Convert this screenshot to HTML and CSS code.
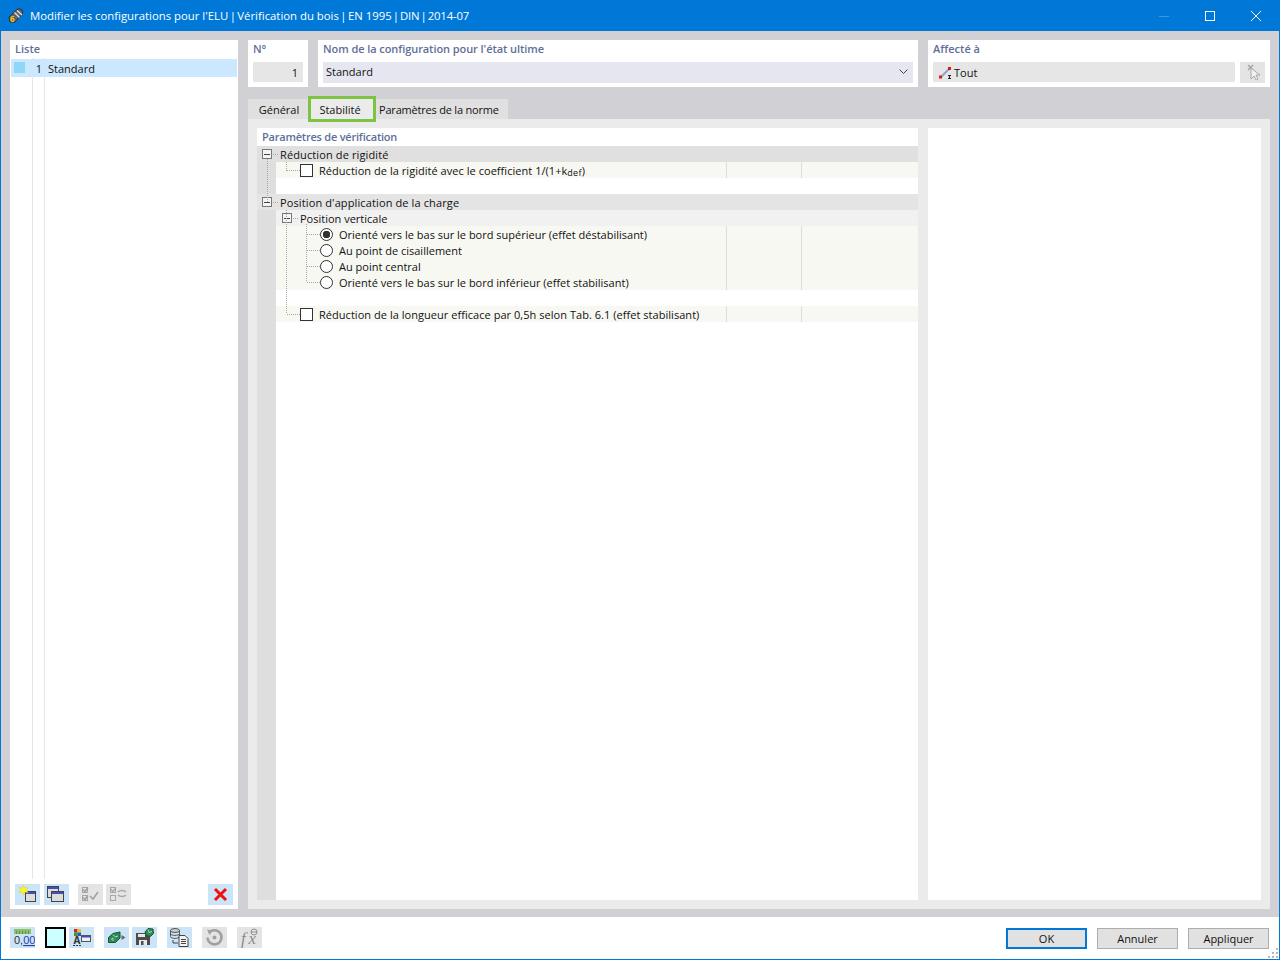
FILE: index.html
```html
<!DOCTYPE html>
<html lang="fr">
<head>
  <meta charset="UTF-8">
  <title>Modifier les configurations pour l'ELU</title>
  <link rel="stylesheet" href="styles.css">
</head>
<body>
  <div class="window">
    <div class="titlebar">
      <svg class="app-icon" width="16" height="16" viewBox="0 0 16 16">
        <path d="M1 9 9 1.500c1.500-1 4-.8 5 .5s1 3.500-.2 4.800L7 14 2 14z" fill="#5f646a" stroke="#2c3034"/>
        <path d="M6.500 4.500l5 5M9 2.500l5 4.500" stroke="#e2e4e6" stroke-width="1.200"/>
        <text x="2" y="14" class="app-six">6</text>
      </svg>
      <span class="title-text">Modifier les configurations pour l'ELU <span class="sep">|</span> Vérification du bois <span class="sep">|</span> EN 1995 <span class="sep sep-tight">|</span> <span class="title-tail">DIN <span class="sep">|</span> 2014-07</span></span>
      <div class="win-btns">
        <span class="win-btn"><svg width="10" height="10" viewBox="0 0 10 10"><path d="M0 5.500h10" stroke="#3f96e0"/></svg></span>
        <span class="win-btn"><svg width="10" height="10" viewBox="0 0 10 10"><rect x=".5" y=".5" width="9" height="9" fill="none" stroke="#fff"/></svg></span>
        <span class="win-btn"><svg width="10" height="10" viewBox="0 0 10 10"><path d="M0 0l10 10M10 0 0 10" stroke="#fff"/></svg></span>
      </div>
    </div>

    <div class="main">
      <div class="list-panel">
        <div class="panel-label">Liste</div>
        <div class="list-body">
          <div class="list-row">
            <span class="swatch"></span>
            <span class="list-no">1</span>
            <span class="list-name">Standard</span>
          </div>
        </div>
        <div class="list-tools">
          <span class="tool">
            <svg width="25" height="21" viewBox="0 0 25 21">
              <rect x="10.500" y="7.500" width="10" height="10" fill="#dcdcdc" stroke="#444"/>
              <rect x="11" y="8" width="9" height="2" fill="#3f51b5"/>
              <path d="M8.500 1l1.300 3.200 3.400-.7-2 2.700 2 2.600-3.400-.7-1.300 3.200-1.300-3.200-3.400.7 2-2.600-2-2.700 3.400.7z" fill="#f8f230" stroke="#e0d020" stroke-width=".5"/>
            </svg>
          </span>
          <span class="tool">
            <svg width="25" height="21" viewBox="0 0 25 21">
              <rect x="3.500" y="2.500" width="11" height="11" fill="#dcdcdc" stroke="#444"/>
              <rect x="4" y="3" width="10" height="2" fill="#3f51b5"/>
              <rect x="7.500" y="7.500" width="12" height="10" fill="#dcdcdc" stroke="#444"/>
              <rect x="8" y="8" width="11" height="2" fill="#3f51b5"/>
            </svg>
          </span>
          <span class="tool off tool-third">
            <svg width="25" height="21" viewBox="0 0 25 21">
              <rect x="4.500" y="3.500" width="5" height="5" fill="none" stroke="#a8a8a8"/>
              <rect x="4.500" y="11.500" width="5" height="5" fill="none" stroke="#a8a8a8"/>
              <path d="M5 5.500l2 2 3-4M5 13.500l2 2 3-4M12 12l3 3 5-7" fill="none" stroke="#a0a0a0" stroke-width="1.500"/>
            </svg>
          </span>
          <span class="tool off tool-fourth">
            <svg width="25" height="21" viewBox="0 0 25 21">
              <rect x="4.500" y="3.500" width="5" height="5" fill="none" stroke="#a8a8a8"/>
              <rect x="4.500" y="11.500" width="5" height="5" fill="none" stroke="#a8a8a8"/>
              <path d="M5 5.500l2 2 3-4" fill="none" stroke="#a0a0a0" stroke-width="1.200"/>
              <path d="M12 8c2-2 6-2 8 0M20 11c-2 2-6 2-8 0" fill="none" stroke="#a8a8a8" stroke-width="1.500"/>
            </svg>
          </span>
          <span class="tool push-right">
            <svg width="25" height="21" viewBox="0 0 25 21">
              <path d="M7 5l11 11M18 5 7 16" stroke="#f01010" stroke-width="3"/>
            </svg>
          </span>
        </div>
      </div>

      <div class="right-col">
        <div class="head-row">
          <div class="head-box box-no">
            <div class="panel-label">N°</div>
            <div class="field field-no">1</div>
          </div>
          <div class="head-box box-name">
            <div class="panel-label label-name">Nom de la configuration pour l'état ultime</div>
            <div class="field field-name">
              <span>Standard</span>
              <svg width="9" height="5" viewBox="0 0 9 5"><path d="M.5.5 4.500 4.500 8.500.5" fill="none" stroke="#444"/></svg>
            </div>
          </div>
          <div class="head-box box-to">
            <div class="panel-label">Affecté à</div>
            <div class="to-line">
              <div class="field field-to">
                <svg width="13" height="13" viewBox="0 0 13 13">
                  <path d="M2 11 10 3" stroke="#8aa4cc" stroke-width="2"/>
                  <rect x="0" y="9.500" width="3" height="3" fill="#e01818"/>
                  <rect x="9" y="1" width="3" height="3" fill="#e01818"/>
                  <path d="M9 9.500h3M10.500 9.500v3.500M9 12.500h3" stroke="#222"/>
                </svg>
                <span>Tout</span>
              </div>
              <span class="pick-btn">
                <svg width="25" height="21" viewBox="0 0 25 21">
                  <path d="M8 3l5 5M13 3 8 8" stroke="#a0a0a0" stroke-width="1.200"/>
                  <path d="M11 6v11l3-3 2 4 2-1-2-4h4z" fill="#f0f0f0" stroke="#a8a8a8"/>
                </svg>
              </span>
            </div>
          </div>
        </div>

        <div class="tabs">
          <span class="tab tab-first">Général</span>
          <span class="tab tab-active">Stabilité</span>
          <span class="tab tab-last">Paramètres de la norme</span>
        </div>

        <div class="tab-page">
          <div class="params">
            <div class="panel-label params-label">Paramètres de vérification</div>
            <div class="tree">
              <svg class="tree-lines" width="80" height="180" viewBox="0 0 80 180">
                <path d="M10.500 13v44M16 8.500h6M29.500 16v9M30 24.500h13M29.500 64v104M30 168.500h13M36 72.500h6M49.500 78v58M50 88.500h13M50 104.500h13M50 120.500h13M50 136.500h13M16 56.500h6" fill="none" stroke="#a8a8a8" stroke-dasharray="1 1"/>
              </svg>
              <div class="row row-head">
                <span class="exp"></span><span>Réduction de rigidité</span>
              </div>
              <div class="row row-item">
                <div class="cell cell-main lvl1"><span class="check"></span><span>Réduction de la rigidité avec le coefficient 1/(1+k<sub>def</sub>)</span></div>
                <div class="cell"></div><div class="cell"></div>
              </div>
              <div class="row-blank"></div>
              <div class="row row-head row-head2">
                <span class="exp"></span><span>Position d'application de la charge</span>
              </div>
              <div class="row row-sub">
                <span class="exp"></span><span>Position verticale</span>
              </div>
              <div class="row row-item">
                <div class="cell cell-main lvl2"><span class="radio radio-on"></span><span>Orienté vers le bas sur le bord supérieur (effet déstabilisant)</span></div>
                <div class="cell"></div><div class="cell"></div>
              </div>
              <div class="row row-item">
                <div class="cell cell-main lvl2"><span class="radio"></span><span>Au point de cisaillement</span></div>
                <div class="cell"></div><div class="cell"></div>
              </div>
              <div class="row row-item">
                <div class="cell cell-main lvl2"><span class="radio"></span><span>Au point central</span></div>
                <div class="cell"></div><div class="cell"></div>
              </div>
              <div class="row row-item">
                <div class="cell cell-main lvl2"><span class="radio"></span><span>Orienté vers le bas sur le bord inférieur (effet stabilisant)</span></div>
                <div class="cell"></div><div class="cell"></div>
              </div>
              <div class="row-blank"></div>
              <div class="row row-item">
                <div class="cell cell-main lvl1"><span class="check"></span><span>Réduction de la longueur efficace par 0,5h selon Tab. 6.1 (effet stabilisant)</span></div>
                <div class="cell"></div><div class="cell"></div>
              </div>
            </div>
          </div>
          <div class="side-pane"></div>
        </div>
      </div>
    </div>

    <div class="footer">
      <span class="tool units">
        <svg width="25" height="21" viewBox="0 0 25 21">
          <rect x="4" y="2" width="17" height="5" fill="#8cc068"/>
          <path d="M6.500 4v3M9.500 4v3M12.500 4v3M15.500 4v3M18.500 4v3" stroke="#5c9440"/>
          <text x="4" y="17" class="units-text">0,<tspan class="units-dec">00</tspan></text>
        </svg>
      </span>
      <span class="color-box"></span>
      <span class="tool">
        <svg width="25" height="21" viewBox="0 0 25 21">
          <rect x="5" y="2" width="3.500" height="3.500" fill="#e02020"/>
          <rect x="8.500" y="2" width="3.500" height="3.500" fill="#e8c820"/>
          <rect x="5" y="5.500" width="3.500" height="3.500" fill="#30a030"/>
          <rect x="8.500" y="5.500" width="3.500" height="3.500" fill="#3050d0"/>
          <text x="4.500" y="17" class="a-text">A</text>
          <rect x="12.500" y="8.500" width="9" height="6" fill="#f0f0f0" stroke="#555"/>
          <rect x="13" y="9" width="8" height="1.500" fill="#3f51b5"/>
          <path d="M4 18.500h2M7 18.500h2M10 18.500h2" stroke="#333"/>
        </svg>
      </span>
      <span class="tool gap-tool">
        <svg width="25" height="21" viewBox="0 0 25 21">
          <path d="M4.500 10.500 9 6.500l7-1.500v6l-4.500 4.500h-7z" fill="#2e8b57" stroke="#1c5236"/>
          <path d="M7 12.500l2-1.500v3M11 10l3-1M9 7.500l1.500 2" stroke="#a6dcbc" fill="none"/>
          <path d="M17.500 8l4 2.500-4 2.500z" fill="#666"/>
        </svg>
      </span>
      <span class="tool">
        <svg width="25" height="21" viewBox="0 0 25 21">
          <path d="M4 6h11l3 3v9H4z" fill="#4c4c4c"/>
          <rect x="6" y="7" width="7" height="3" fill="#e8e8e8"/>
          <rect x="7" y="13" width="8" height="5" fill="#e8e8e8"/>
          <rect x="9" y="14" width="2.500" height="4" fill="#4c4c4c"/>
          <path d="M13 5l3-3.500 5 .5.500 4.500-3 3-4.500-1z" fill="#2e8b57" stroke="#1c5236"/>
          <path d="M16 2.500l1 3 3-1" fill="none" stroke="#a6dcbc"/>
        </svg>
      </span>
      <span class="tool gap-tool">
        <svg width="25" height="21" viewBox="0 0 25 21">
          <ellipse cx="8" cy="3.500" rx="4.500" ry="2" fill="#ccc" stroke="#555"/>
          <path d="M3.500 6.500c0 2.500 9 2.500 9 0M3.500 9.500c0 2.500 9 2.500 9 0M3.500 3.500v6M12.500 3.500v6" fill="none" stroke="#555"/>
          <path d="M6 13v3h5" fill="none" stroke="#444"/>
          <path d="M12 8.500h6l3 3v8h-9z" fill="#f4f4f4" stroke="#444"/>
          <path d="M14 12.500h5M14 14.500h5M14 16.500h5" stroke="#444"/>
        </svg>
      </span>
      <span class="tool off gap-tool">
        <svg width="25" height="21" viewBox="0 0 25 21">
          <path d="M7 6a7 7 0 1 1-1.500 4.500" fill="none" stroke="#a0a0a0" stroke-width="2.500"/>
          <path d="M5 2.500l5.500 1-3 4.500z" fill="#a0a0a0"/>
          <circle cx="12.500" cy="10.500" r="2" fill="#a0a0a0"/>
        </svg>
      </span>
      <span class="tool off gap-tool">
        <svg width="25" height="21" viewBox="0 0 25 21">
          <text x="4" y="17" class="fx-text">f</text>
          <text x="11.500" y="17" class="fx-text">x</text>
          <circle cx="17" cy="5" r="3" fill="none" stroke="#909090"/>
          <path d="M14 5h6" stroke="#909090"/>
        </svg>
      </span>
      <div class="actions">
        <button class="btn btn-ok" type="button">OK</button>
        <button class="btn" type="button">Annuler</button>
        <button class="btn" type="button">Appliquer</button>
      </div>
      <svg class="grip" width="11" height="11" viewBox="0 0 11 11">
        <path d="M8 0h2v2H8zM4 4h2v2H4zM8 4h2v2H8zM0 8h2v2H0zM4 8h2v2H4zM8 8h2v2H8z" fill="#b8b8b8"/>
      </svg>
    </div>
  </div>
</body>
</html>
```

FILE: styles.css
```css
* {
  box-sizing: border-box;
}
body {
  margin: 0;
  font-family: "Open Sans", "Noto Sans", sans-serif;
  font-size: 11px;
  color: #111;
}
.window {
  width: 1280px;
  height: 960px;
  display: flex;
  flex-direction: column;
  border: 1px solid #0078d7;
  border-top: none;
  background: #d1d0d5;
}

/* title bar */
.titlebar {
  height: 31px;
  margin: 0 -1px;
  padding-left: 8px;
  display: flex;
  align-items: center;
  background: #0078d7;
  color: #fff;
  font-size: 11.350px;
}
.app-icon {
  margin-right: 6px;
}
.app-six {
  font-size: 8px;
  font-weight: 700;
  fill: #ffc800;
}
.title-text {
  flex: 1;
}
.sep {
  margin: 0 -1.500px;
}
.sep-tight {
  margin: 0 -2px;
}
.title-tail {
  letter-spacing: -.2px;
}
.win-btns {
  display: flex;
  margin-right: 1px;
}
.win-btn {
  width: 46px;
  height: 31px;
  display: flex;
  align-items: center;
  justify-content: center;
}

/* main area */
.main {
  flex: 1;
  min-height: 0;
  display: flex;
  gap: 10px;
  padding: 9px 9px 8px;
}
.panel-label {
  height: 18px;
  padding: 1px 0 0 5px;
  color: #5f6f99;
  font-weight: 600;
}
.list-panel {
  width: 228px;
  display: flex;
  flex-direction: column;
  background: #fff;
}
.list-body {
  flex: 1;
  padding: 1px 1px 0;
  margin-bottom: 5px;
  background:
    linear-gradient(#e6e6e6, #e6e6e6) 22px 0 / 1px 100% no-repeat,
    linear-gradient(#e6e6e6, #e6e6e6) 34px 0 / 1px 100% no-repeat;
}
.list-row {
  height: 18px;
  display: flex;
  align-items: center;
  background: #cce8ff;
}
.swatch {
  width: 11px;
  height: 11px;
  margin: 0 0 2px 3px;
  background: #8fd7f7;
}
.list-no {
  width: 17px;
  text-align: right;
}
.list-name {
  margin-left: 6px;
}
.list-tools {
  height: 25px;
  padding: 0 5px 4px;
  display: flex;
  gap: 4px;
}
.tool {
  width: 25px;
  height: 21px;
  flex: none;
  display: block;
  background: #cce4f7;
}
.tool svg {
  display: block;
}
.tool.off {
  background: #e4e4e4;
}
.tool-third {
  margin-left: 5px;
}
.tool-fourth {
  margin-left: -1px;
}
.push-right {
  margin-left: auto;
}

/* header boxes */
.right-col {
  flex: 1;
  min-width: 0;
  display: flex;
  flex-direction: column;
}
.head-row {
  height: 47px;
  display: flex;
  gap: 10px;
}
.head-box {
  background: #fff;
  padding: 0 5px;
}
.head-box .panel-label {
  padding-left: 0;
  height: 22px;
  padding-top: 1px;
}
.label-name {
  letter-spacing: -.07px;
}
.box-no {
  width: 60px;
}
.box-name {
  width: 600px;
}
.box-to {
  width: 342px;
}
.field {
  height: 20px;
  display: flex;
  align-items: center;
  background: #e6e6e6;
}
.field-no {
  justify-content: flex-end;
  padding: 1px 5px 0 0;
}
.field-name {
  height: 21px;
  justify-content: space-between;
  padding: 0 5px 2px 3px;
  background: #e6e6f0;
}
.to-line {
  display: flex;
  gap: 5px;
}
.field-to {
  flex: 1;
  gap: 2px;
  padding-left: 6px;
}
.pick-btn {
  width: 25px;
  height: 21px;
  background: #e4e4e4;
}
.pick-btn svg {
  display: block;
}

/* tabs */
.tabs {
  height: 20px;
  margin-top: 12px;
  display: flex;
  align-items: center;
}
.tab {
  height: 20px;
  display: flex;
  align-items: center;
  justify-content: center;
  background: #e0e0e0;
}
.tab-first {
  width: 60px;
  padding-left: 2px;
}
.tab-active {
  position: relative;
  z-index: 1;
  width: 68px;
  height: 26px;
  padding-right: 4px;
  border: 3px solid #7dc243;
  background: #ebebeb;
}
.tab-last {
  width: 132px;
  justify-content: flex-start;
  padding-left: 3px;
  letter-spacing: -.2px;
}
.tab-page {
  flex: 1;
  min-height: 0;
  display: flex;
  gap: 10px;
  padding: 9px;
  background: #ebebeb;
}
.params {
  width: 661px;
  display: flex;
  flex-direction: column;
  background: #fff;
}
.params-label {
  padding-left: 5px;
  letter-spacing: -.22px;
}
.side-pane {
  flex: 1;
  background: #fff;
}

/* tree */
.tree {
  position: relative;
  flex: 1;
  background: linear-gradient(to right, #dedede 19px, #fff 19px);
}
.tree-lines {
  position: absolute;
  left: 0;
  top: 0;
  pointer-events: none;
}
.row {
  height: 16px;
  display: flex;
  align-items: center;
}
.row-blank {
  height: 16px;
}
.row-head {
  padding-left: 5px;
  gap: 8px;
  letter-spacing: .12px;
  background: #e0e0e0;
}
.row-head2 {
  background: #e4e4e4;
}
.row-sub {
  margin-left: 19px;
  padding-left: 6px;
  gap: 8px;
  background: #f1f1f1;
}
.row-item {
  margin-left: 19px;
  display: grid;
  grid-template-columns: 450px 75px 1fr;
  background: #f8f8f3;
}
.cell {
  height: 16px;
  border-left: 1px solid #dfdfda;
}
.cell-main {
  display: flex;
  align-items: center;
  border-left: none;
}
.lvl1 {
  padding-left: 24px;
  gap: 6px;
  letter-spacing: .04px;
}
.lvl2 {
  padding-left: 44px;
  gap: 6px;
}
.exp {
  width: 10px;
  height: 10px;
  flex: none;
  border: 1px solid #777;
  background: linear-gradient(#444, #444) center / 6px 1px no-repeat #f4f4f4;
}
.check {
  width: 13px;
  height: 13px;
  flex: none;
  border: 1px solid #333;
  background: #fff;
}
.radio {
  width: 13px;
  height: 13px;
  flex: none;
  border: 1px solid #333;
  border-radius: 50%;
  background: #fff;
}
.radio-on {
  background: radial-gradient(circle, #333 3.500px, #fff 4px);
}
sub {
  font-size: 9px;
  line-height: 0;
  vertical-align: -1px;
  letter-spacing: .3px;
}

/* footer */
.footer {
  position: relative;
  height: 42px;
  padding: 10px 10px 0 9px;
  display: flex;
  align-items: flex-start;
  gap: 3px;
  background: #fff;
}
.units {
  margin-right: 7px;
}
.units-text {
  font-size: 11px;
  fill: #333;
  font-family: "Liberation Sans", sans-serif;
}
.units-dec {
  fill: #1f3fb0;
  text-decoration: underline;
}
.color-box {
  width: 21px;
  height: 21px;
  flex: none;
  border: 2px solid #000;
  background: #ccffff;
}
.a-text {
  font-size: 10px;
  font-weight: 700;
  fill: #333;
}
.fx-text {
  font-family: "Liberation Serif", serif;
  font-style: italic;
  font-size: 17px;
  fill: #8c8c8c;
}
.gap-tool {
  margin-left: 7px;
}
.actions {
  margin-left: auto;
  margin-top: 1px;
  display: flex;
  gap: 10px;
}
.btn {
  width: 81px;
  height: 21px;
  padding: 0;
  border: 1px solid #adadad;
  background: #e1e1e1;
  color: #111;
  font: inherit;
}
.btn-ok {
  border: 2px solid #0078d7;
}
.grip {
  position: absolute;
  right: 0;
  bottom: 0;
}
```
